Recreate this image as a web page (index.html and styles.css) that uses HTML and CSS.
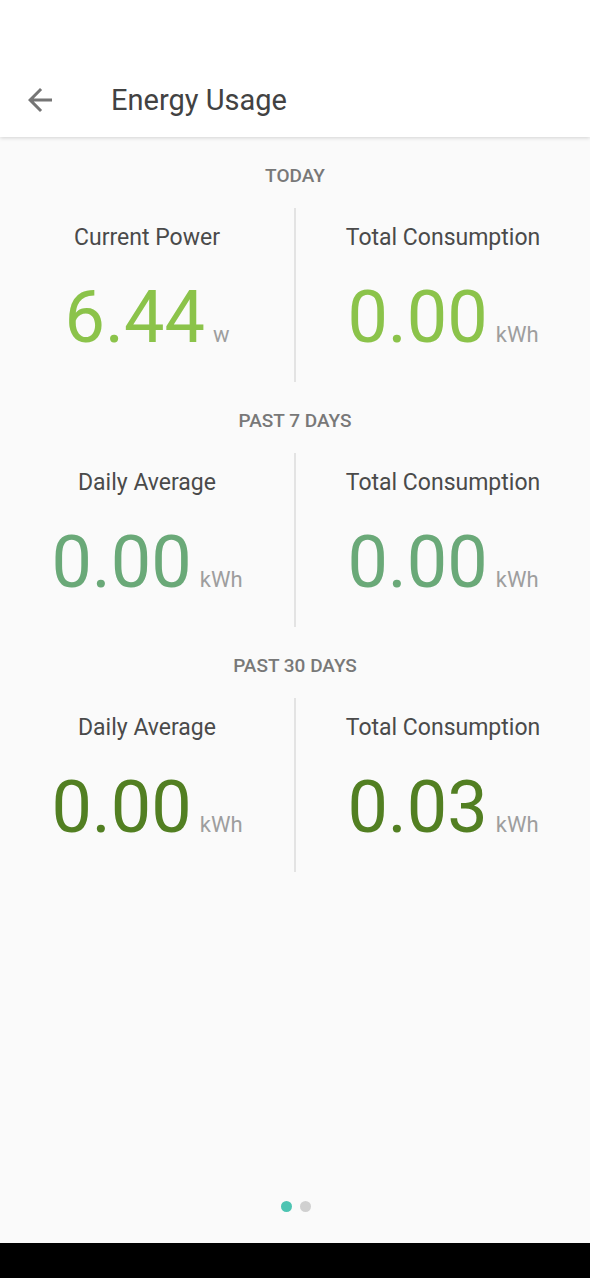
FILE: index.html
```html
<!DOCTYPE html>
<html lang="en">
<head>
<meta charset="utf-8">
<title>Energy Usage</title>
<link rel="stylesheet" href="styles.css">
</head>
<body>
<header class="appbar">
  <button class="back" aria-label="Back">
    <svg viewBox="0 0 24 24" width="36" height="36"><path d="M20 11H7.83l5.59-5.59L12 4l-8 8 8 8 1.41-1.41L7.83 13H20v-2z" fill="#757575"/></svg>
  </button>
  <h1 class="title">Energy Usage</h1>
</header>
<main class="content">
  <section class="period">
    <h2 class="period-label">TODAY</h2>
    <div class="row">
      <div class="stat">
        <div class="stat-label">Current Power</div>
        <div class="stat-value"><span class="num light">6.44</span><span class="unit">w</span></div>
      </div>
      <div class="stat divided">
        <div class="stat-label">Total Consumption</div>
        <div class="stat-value"><span class="num light">0.00</span><span class="unit">kWh</span></div>
      </div>
    </div>
  </section>
  <section class="period">
    <h2 class="period-label">PAST 7 DAYS</h2>
    <div class="row">
      <div class="stat">
        <div class="stat-label">Daily Average</div>
        <div class="stat-value"><span class="num mid">0.00</span><span class="unit">kWh</span></div>
      </div>
      <div class="stat divided">
        <div class="stat-label">Total Consumption</div>
        <div class="stat-value"><span class="num mid">0.00</span><span class="unit">kWh</span></div>
      </div>
    </div>
  </section>
  <section class="period">
    <h2 class="period-label">PAST 30 DAYS</h2>
    <div class="row">
      <div class="stat">
        <div class="stat-label">Daily Average</div>
        <div class="stat-value"><span class="num dark">0.00</span><span class="unit">kWh</span></div>
      </div>
      <div class="stat divided">
        <div class="stat-label">Total Consumption</div>
        <div class="stat-value"><span class="num dark">0.03</span><span class="unit">kWh</span></div>
      </div>
    </div>
  </section>
</main>
<div class="pager">
  <span class="dot active"></span>
  <span class="dot"></span>
</div>
<div class="navbar"></div>
</body>
</html>
```
FILE: styles.css
```css
html, body {
  margin: 0;
  padding: 0;
}
body {
  background: #fafafa;
  font-family: Roboto, "Noto Sans", "Liberation Sans", sans-serif;
  min-height: 100vh;
  display: flex;
  flex-direction: column;
}
.appbar {
  position: relative;
  z-index: 1;
  height: 137px;
  box-sizing: border-box;
  padding-top: 62px;
  background: #ffffff;
  box-shadow: 0 1px 4px rgba(0, 0, 0, 0.16);
  display: flex;
  align-items: center;
}
.back {
  margin-left: 22px;
  width: 36px;
  height: 36px;
  padding: 0;
  border: 0;
  background: none;
  display: flex;
}
.title {
  margin: 0 0 0 53px;
  font-size: 29px;
  font-weight: 400;
  color: #424242;
  line-height: 36px;
}
.content {
  flex: 1;
}
.period {
  padding-top: 27px;
}
.period-label {
  margin: 0;
  text-align: center;
  font-size: 19px;
  font-weight: 500;
  color: #787878;
  line-height: 24px;
}
.row {
  margin-top: 20px;
  height: 174px;
  display: flex;
}
.stat {
  flex: 1;
  display: flex;
  flex-direction: column;
  align-items: center;
  padding-top: 16px;
}
.divided {
  border-left: 2px solid #e3e3e3;
}
.stat-label {
  font-size: 23px;
  line-height: 28px;
  color: #4a4a4a;
}
.stat-value {
  margin-top: 30px;
  display: flex;
  align-items: baseline;
  gap: 8px;
}
.num {
  font-size: 72px;
  line-height: 72px;
}
.light { color: #8bc34a; }
.mid { color: #6aa978; }
.dark { color: #527f22; }
.unit {
  font-size: 22px;
  color: #9e9e9e;
}
.pager {
  display: flex;
  justify-content: center;
  gap: 8px;
  padding-bottom: 31px;
  padding-left: 1px;
}
.dot {
  width: 11px;
  height: 11px;
  border-radius: 50%;
  background: #d0d0d0;
}
.dot.active {
  background: #4dc4b2;
}
.navbar {
  height: 35px;
  background: #000000;
}
```
